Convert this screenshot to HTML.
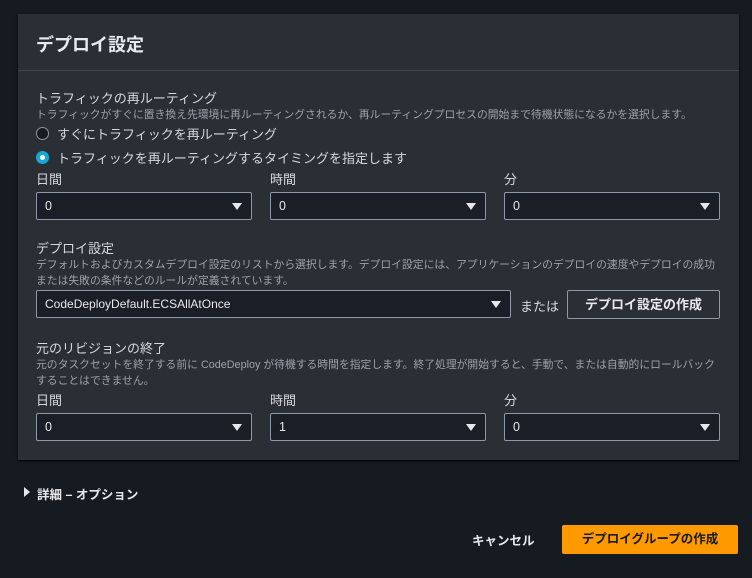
<!DOCTYPE html>
<html><head><meta charset="utf-8"><style>
*{box-sizing:border-box;margin:0;padding:0}
body{width:752px;height:578px;background:#161a21;font-family:"Liberation Sans","Noto Sans CJK JP",sans-serif;color:#d1d5db;position:relative;overflow:hidden}
.a{position:absolute;white-space:nowrap}
.panel{position:absolute;left:18px;top:14px;width:721px;height:446px;background:#2a2e35;box-shadow:0 1px 2px #000}
.hr{position:absolute;left:18px;top:70px;width:721px;height:1px;background:#414750}
.t{font-size:13px;color:#d5d9de}
.d{font-size:10.8px;color:#9ba3ad}
.sel{position:absolute;height:28px;background:#1a1f27;border:1px solid #8d99a8;border-radius:2px;font-size:12.5px;color:#e6e8eb;padding:6px 8px}
.sel:after{content:"";position:absolute;right:9px;top:10px;border-left:5px solid transparent;border-right:5px solid transparent;border-top:7px solid #e6e8eb}
.b{font-weight:bold}
</style></head><body>
<div class="panel"></div><div class="hr"></div>
<div class="a b" style="left:36px;top:31px;font-size:18px;color:#e8eaed">デプロイ設定</div>
<div class="a t" style="left:36px;top:88px">トラフィックの再ルーティング</div>
<div class="a d" style="left:36px;top:106px">トラフィックがすぐに置き換え先環境に再ルーティングされるか、再ルーティングプロセスの開始まで待機状態になるかを選択します。</div>
<div class="a" style="left:36px;top:127px;width:13px;height:13px;border-radius:50%;border:1px solid #8d99a8;background:#161a21"></div>
<div class="a t" style="left:57px;top:124px">すぐにトラフィックを再ルーティング</div>
<div class="a" style="left:36px;top:151px;width:13px;height:13px;border-radius:50%;background:#13a9d6"><div style="position:absolute;left:4px;top:4px;width:5px;height:5px;border-radius:50%;background:#fff"></div></div>
<div class="a t" style="left:57px;top:148px">トラフィックを再ルーティングするタイミングを指定します</div>
<div class="a t" style="left:36px;top:169px">日間</div><div class="a t" style="left:270px;top:169px">時間</div><div class="a t" style="left:504px;top:169px">分</div>
<div class="sel" style="left:36px;top:192px;width:216px">0</div>
<div class="sel" style="left:270px;top:192px;width:216px">0</div>
<div class="sel" style="left:504px;top:192px;width:216px">0</div>
<div class="a t" style="left:36px;top:238px">デプロイ設定</div>
<div class="a d" style="left:36px;top:256px">デフォルトおよびカスタムデプロイ設定のリストから選択します。デプロイ設定には、アプリケーションのデプロイの速度やデプロイの成功</div>
<div class="a d" style="left:36px;top:272px">または失敗の条件などのルールが定義されています。</div>
<div class="sel" style="left:36px;top:290px;width:475px;font-size:12px">CodeDeployDefault.ECSAllAtOnce</div>
<div class="a t" style="left:520px;top:296px">または</div>
<div class="a b" style="left:567px;top:290px;width:153px;height:29px;border:1px solid #8d99a8;border-radius:2px;font-size:13px;color:#e6e8eb;text-align:center;line-height:27px">デプロイ設定の作成</div>
<div class="a t" style="left:36px;top:338px">元のリビジョンの終了</div>
<div class="a d" style="left:36px;top:356px">元のタスクセットを終了する前に CodeDeploy が待機する時間を指定します。終了処理が開始すると、手動で、または自動的にロールバック</div>
<div class="a d" style="left:36px;top:372px">することはできません。</div>
<div class="a t" style="left:36px;top:390px">日間</div><div class="a t" style="left:270px;top:390px">時間</div><div class="a t" style="left:504px;top:390px">分</div>
<div class="sel" style="left:36px;top:413px;width:216px">0</div>
<div class="sel" style="left:270px;top:413px;width:216px">1</div>
<div class="sel" style="left:504px;top:413px;width:216px">0</div>
<div class="a" style="left:24px;top:487px;border-top:5px solid transparent;border-bottom:5px solid transparent;border-left:6px solid #e6e8eb"></div>
<div class="a b" style="left:37px;top:484px;font-size:12.5px;color:#e6e8eb">詳細 – オプション</div>
<div class="a b" style="left:472px;top:530px;font-size:12.5px;color:#e6e8eb">キャンセル</div>
<div class="a b" style="left:562px;top:525px;width:176px;height:29px;background:#ff9900;border-radius:2px;font-size:12.5px;color:#161a21;text-align:center;line-height:29px">デプロイグループの作成</div>
</body></html>
